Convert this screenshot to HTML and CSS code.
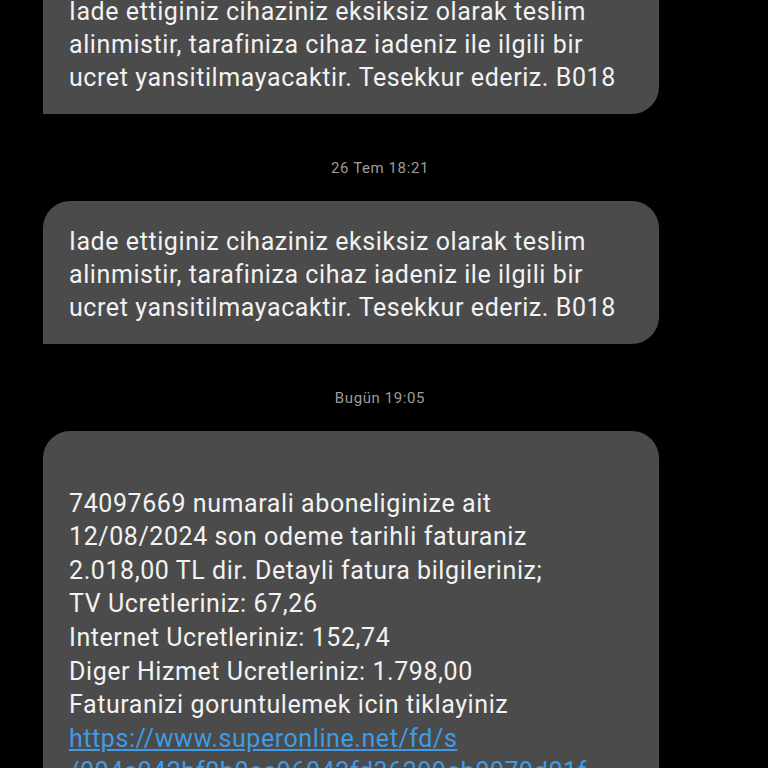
FILE: index.html
```html
<!DOCTYPE html>
<html lang="tr">
<head>
<meta charset="utf-8">
<link rel="stylesheet" href="styles.css">
</head>
<body>
<main class="thread">
  <div class="bubble first">Iade ettiginiz cihaziniz eksiksiz olarak teslim alinmistir, tarafiniza cihaz iadeniz ile ilgili bir ucret yansitilmayacaktir. Tesekkur ederiz. B018</div>
  <div class="stamp">26 Tem 18:21</div>
  <div class="bubble">Iade ettiginiz cihaziniz eksiksiz olarak teslim alinmistir, tarafiniza cihaz iadeniz ile ilgili bir ucret yansitilmayacaktir. Tesekkur ederiz. B018</div>
  <div class="stamp">Bugün 19:05</div>
  <div class="bubble tall"><br>74097669 numarali aboneliginize ait<br>12/08/2024 son odeme tarihli faturaniz<br>2.018,00 TL dir. Detayli fatura bilgileriniz;<br>TV Ucretleriniz: 67,26<br>Internet Ucretleriniz: 152,74<br>Diger Hizmet Ucretleriniz: 1.798,00<br>Faturanizi goruntulemek icin tiklayiniz<br><a class="link" href="#">https://www.superonline.net/fd/s<br>/004c042bf0b0ee96042fd36299eb0079d01f</a></div>
</main>
</body>
</html>
```
FILE: styles.css
```css
html, body {
  margin: 0;
  padding: 0;
  background: #000;
  height: 768px;
  overflow: hidden;
}
.thread {
  display: flex;
  flex-direction: column;
  padding-left: 43px;
  font-family: Roboto, "Noto Sans", sans-serif;
}
.bubble {
  width: 616px;
  box-sizing: border-box;
  background: #4b4b4b;
  color: #f2f2f2;
  font-size: 25px;
  letter-spacing: 0.58px;
  line-height: 33px;
  padding: 24px 18px 20px 26px;
  border-radius: 27px 27px 27px 0;
}
.first {
  margin-top: -29px;
}
.tall {
  line-height: 33.6px;
  padding: 22px 18px 23px 26px;
  white-space: nowrap;
}
.stamp {
  width: 616px;
  text-align: center;
  color: #9c9c9c;
  font-size: 15px;
  letter-spacing: 0.6px;
  line-height: 20px;
  padding: 44px 0 23px 58px;
  box-sizing: border-box;
}
.link {
  color: #3f9be6;
  text-decoration: underline;
}
```
